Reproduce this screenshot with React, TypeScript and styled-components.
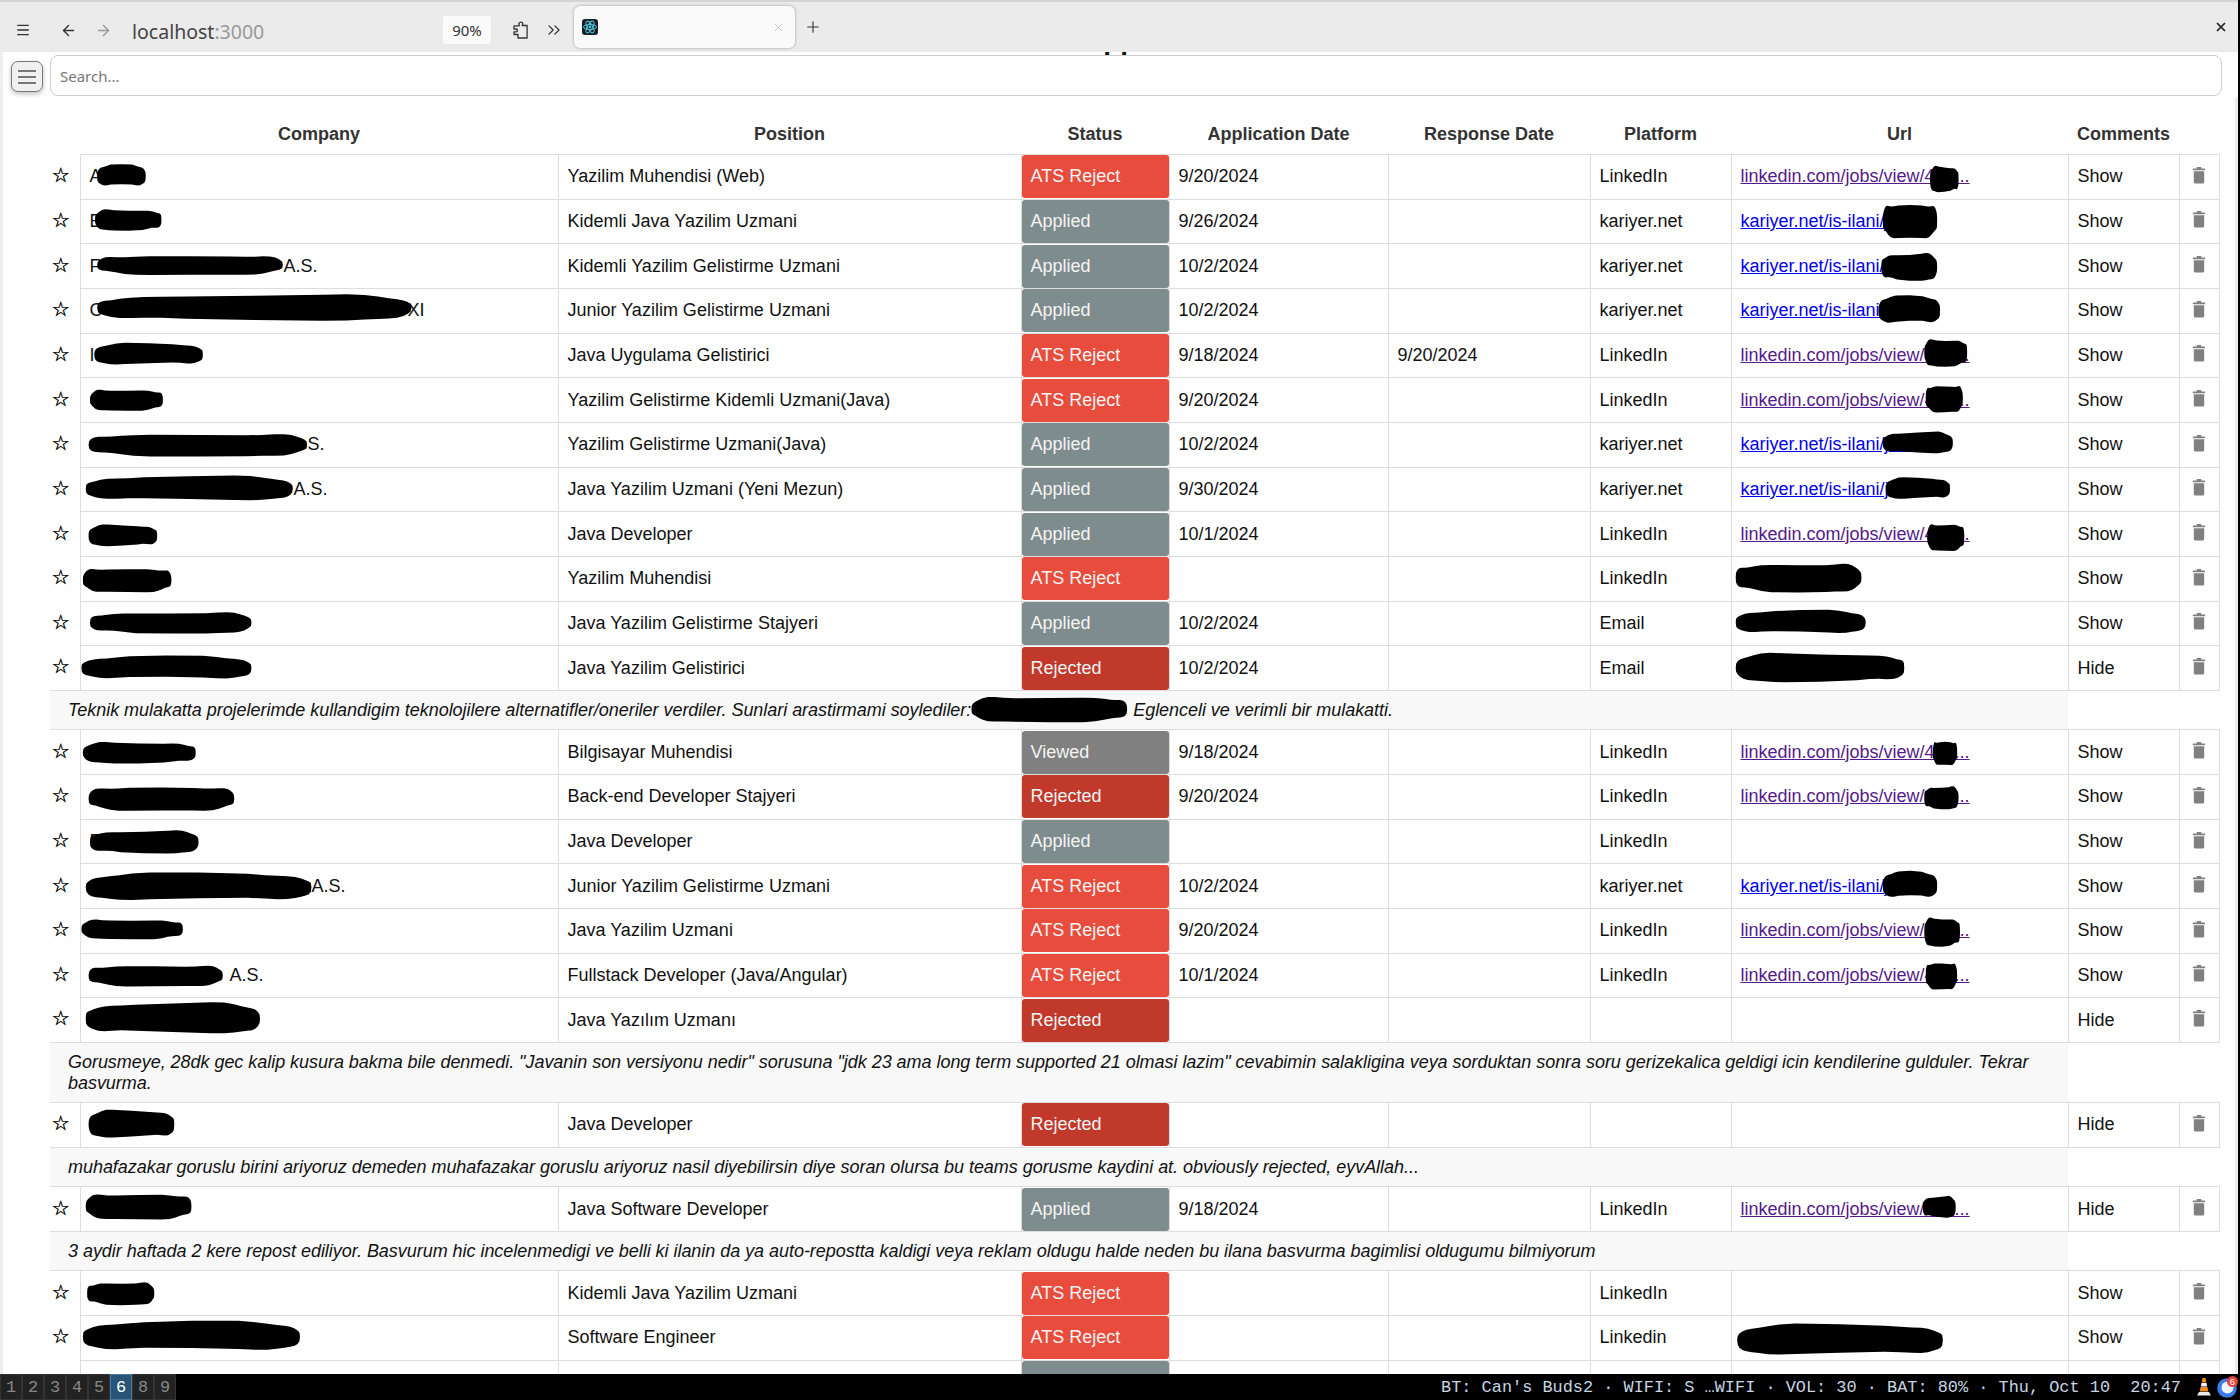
import React from "react"
import styled, {createGlobalStyle} from "styled-components"
import {ArrowLeft, ArrowRight, ChevronsRight, Menu, Plus, X} from "lucide-react"

type Status = "ATS Reject" | "Applied" | "Rejected" | "Viewed"

interface Job {
    lead?: string
    gap?: number
    tail?: string
    position: string
    status: Status
    applied?: string
    response?: string
    platform?: string
    url?: string
    visited?: boolean
    open?: boolean
    cutOff?: boolean
    note?: React.ReactNode
}

const Filler = styled.span<{$width: number}>`
    display: inline-block;
    width: ${p => p.$width}px;
`

const LI = "linkedin.com/jobs/view/401..."
const KA = "kariyer.net/is-ilani/ja..."

const jobs: Job[] = [
    {lead: "A", position: "Yazilim Muhendisi (Web)", status: "ATS Reject", applied: "9/20/2024", platform: "LinkedIn", url: LI, visited: true},
    {lead: "E", position: "Kidemli Java Yazilim Uzmani", status: "Applied", applied: "9/26/2024", platform: "kariyer.net", url: KA},
    {lead: "F", gap: 183, tail: "A.S.", position: "Kidemli Yazilim Gelistirme Uzmani", status: "Applied", applied: "10/2/2024", platform: "kariyer.net", url: KA},
    {lead: "C", gap: 305, tail: "XI", position: "Junior Yazilim Gelistirme Uzmani", status: "Applied", applied: "10/2/2024", platform: "kariyer.net", url: KA},
    {lead: "I", position: "Java Uygulama Gelistirici", status: "ATS Reject", applied: "9/18/2024", response: "9/20/2024", platform: "LinkedIn", url: LI, visited: true},
    {position: "Yazilim Gelistirme Kidemli Uzmani(Java)", status: "ATS Reject", applied: "9/20/2024", platform: "LinkedIn", url: LI, visited: true},
    {gap: 218, tail: "S.", position: "Yazilim Gelistirme Uzmani(Java)", status: "Applied", applied: "10/2/2024", platform: "kariyer.net", url: KA},
    {gap: 204, tail: "A.S.", position: "Java Yazilim Uzmani (Yeni Mezun)", status: "Applied", applied: "9/30/2024", platform: "kariyer.net", url: KA},
    {position: "Java Developer", status: "Applied", applied: "10/1/2024", platform: "LinkedIn", url: LI, visited: true},
    {position: "Yazilim Muhendisi", status: "ATS Reject", platform: "LinkedIn", url: "linkedin.com"},
    {position: "Java Yazilim Gelistirme Stajyeri", status: "Applied", applied: "10/2/2024", platform: "Email"},
    {
        position: "Java Yazilim Gelistirici", status: "Rejected", applied: "10/2/2024", platform: "Email", open: true,
        note: <>Teknik mulakatta projelerimde kullandigim teknolojilere alternatifler/oneriler verdiler. Sunlari arastirmami soylediler:<Filler $width={157}/> Eglenceli ve verimli bir mulakatti.</>,
    },
    {position: "Bilgisayar Muhendisi", status: "Viewed", applied: "9/18/2024", platform: "LinkedIn", url: LI, visited: true},
    {position: "Back-end Developer Stajyeri", status: "Rejected", applied: "9/20/2024", platform: "LinkedIn", url: LI, visited: true},
    {lead: "E", position: "Java Developer", status: "Applied", platform: "LinkedIn"},
    {gap: 222, tail: "A.S.", position: "Junior Yazilim Gelistirme Uzmani", status: "ATS Reject", applied: "10/2/2024", platform: "kariyer.net", url: KA},
    {position: "Java Yazilim Uzmani", status: "ATS Reject", applied: "9/20/2024", platform: "LinkedIn", url: LI, visited: true},
    {gap: 140, tail: "A.S.", position: "Fullstack Developer (Java/Angular)", status: "ATS Reject", applied: "10/1/2024", platform: "LinkedIn", url: LI, visited: true},
    {
        position: "Java Yazılım Uzmanı", status: "Rejected", open: true,
        note: <>Gorusmeye, 28dk gec kalip kusura bakma bile denmedi. "Javanin son versiyonu nedir" sorusuna "jdk 23 ama long term supported 21 olmasi lazim" cevabimin salakligina veya sorduktan sonra soru gerizekalica geldigi icin kendilerine gulduler. Tekrar basvurma.</>,
    },
    {
        position: "Java Developer", status: "Rejected", open: true,
        note: <>muhafazakar goruslu birini ariyoruz demeden muhafazakar goruslu ariyoruz nasil diyebilirsin diye soran olursa bu teams gorusme kaydini at. obviously rejected, eyvAllah...</>,
    },
    {
        position: "Java Software Developer", status: "Applied", applied: "9/18/2024", platform: "LinkedIn", url: LI, visited: true, open: true,
        note: <>3 aydir haftada 2 kere repost ediliyor. Basvurum hic incelenmedigi ve belli ki ilanin da ya auto-repostta kaldigi veya reklam oldugu halde neden bu ilana basvurma bagimlisi oldugumu bilmiyorum</>,
    },
    {position: "Kidemli Java Yazilim Uzmani", status: "ATS Reject", platform: "LinkedIn"},
    {position: "Software Engineer", status: "ATS Reject", platform: "Linkedin"},
    // only the top of this row is above the status bar
    {position: "", status: "Applied", cutOff: true},
]

// scribbled-out parts of the screenshot: x0, x1, y0, y1 on a 1568x980 canvas
const blots: number[][] = [
    [68, 102, 116, 130], [66.500, 113, 147, 161], [68, 198, 179, 192], [68, 288, 207, 224], [66, 142, 241, 255],
    [63, 114, 273, 287], [62, 215, 304, 319], [60, 205, 334, 350], [62, 110, 368, 382], [58, 120, 398, 414],
    [63, 176, 429, 443], [57, 176, 460, 475], [58, 137, 520, 534], [62, 164, 551, 567], [63, 139, 582, 597],
    [60, 218, 612, 630], [57, 128, 644, 657], [62, 156, 676, 690], [60, 182, 703, 723], [62, 122, 778, 796],
    [60, 134, 836, 853], [61, 108, 898, 913], [58, 210, 926, 945],
    [1351, 1371, 117, 134], [1318, 1356, 143, 166], [1317, 1356, 178, 196], [1315, 1358, 208, 226],
    [1347, 1377, 238, 256], [1348, 1374, 270, 288], [1318, 1367, 303, 317], [1320, 1365, 335, 349],
    [1349, 1375, 367, 385], [1215, 1303, 395, 414], [1215, 1306, 428, 443], [1215, 1333, 458, 477],
    [1353, 1370, 519, 535], [1347, 1371, 551, 566], [1318, 1356, 611, 628], [1347, 1372, 643, 662],
    [1348, 1370, 674, 692], [1346, 1369, 838, 852], [1216, 1360, 928, 948], [680, 789, 488, 505],
]

const blotPath = ([x0, x1, y0, y1]: number[], seed: number) => {
    const cx = (x0 + x1) / 2, cy = (y0 + y1) / 2, a = (x1 - x0) / 2, b = (y1 - y0) / 2
    const pts: string[] = []
    for (let i = 0; i < 40; i++) {
        const t = (i / 40) * Math.PI * 2
        const c = Math.cos(t), s = Math.sin(t)
        const wob = 1 + 0.1 * Math.sin(3 * t + seed) + 0.06 * Math.sin(7 * t + seed * 2)
        const x = cx + a * Math.sign(c) * Math.pow(Math.abs(c), 0.45)
        const y = cy + b * wob * Math.sign(s) * Math.pow(Math.abs(s), 0.6)
        pts.push(`${x.toFixed(1)} ${y.toFixed(1)}`)
    }
    return "M" + pts.join("L") + "Z"
}

const statusColors: Record<Status, string> = {
    "ATS Reject": "#e74c3c",
    "Applied": "#7f8c8d",
    "Rejected": "#c0392b",
    "Viewed": "#808080",
}

const GlobalStyle = createGlobalStyle`
    html, body {
        margin: 0;
        background: #fff;
    }
`
const Page = styled.div`
    width: 2240px;
    height: 1400px;
    position: relative;
    overflow: hidden;
    display: flex;
    flex-direction: column;
    font-family: "Liberation Sans", Arial, sans-serif;
    font-size: 18px;
    color: #111;
`
const TabBar = styled.div`
    height: 50px;
    flex: none;
    border-top: 2px solid #d4d4d4;
    background: #ebebeb;
    display: flex;
    align-items: center;
    color: #444;
    font-family: "Noto Sans", sans-serif;
`
const BarIcon = styled.span<{$width: number; $faded?: boolean}>`
    width: ${p => p.$width}px;
    padding-top: 6px;
    flex: none;
    display: flex;
    justify-content: center;
    color: ${p => (p.$faded ? "#999" : "#333")};
    svg {
        flex: none;
    }
`
const Address = styled.div`
    width: 311px;
    margin-left: 16px;
    padding-top: 9px;
    flex: none;
    font-size: 19.500px;
    color: #444;
    span {
        color: #999;
    }
`
const ZoomBadge = styled.div`
    width: 48px;
    height: 28px;
    margin-top: 6px;
    flex: none;
    background: #fafafa;
    border-radius: 3px;
    display: flex;
    align-items: center;
    justify-content: center;
    font-size: 15px;
    color: #333;
`
const TabGap = styled.div`
    width: 15px;
    flex: none;
`
const Tab = styled.div`
    width: 221px;
    height: 42px;
    padding: 0 10px 0 8px;
    box-sizing: border-box;
    flex: none;
    background: #fafafa;
    border-radius: 6px;
    box-shadow: 0 0 3px rgba(0, 0, 0, .35);
    display: flex;
    align-items: center;
    justify-content: space-between;
    color: #aaa;
`
const PlusSlot = styled.span`
    width: 36px;
    flex: none;
    display: flex;
    justify-content: center;
    color: #333;
`
const WindowClose = styled.div`
    margin-left: auto;
    padding-right: 12px;
    color: #222;
    display: flex;
`
const Content = styled.div`
    flex: 1;
    min-height: 0;
    overflow: hidden;
    border-left: 3px solid #eee;
    position: relative;
`
const TitleStrip = styled.div`
    height: 3px;
    overflow: hidden;
    padding-left: 1080px;
    font-size: 28px;
    font-weight: bold;
    color: #111;
`
const TitleText = styled.div`
    margin-top: -26px;
    line-height: 28px;
`
const SearchRow = styled.div`
    display: flex;
    align-items: flex-start;
    gap: 7px;
    padding: 0 18px 0 8px;
    height: 41px;
`
const MenuButton = styled.div`
    width: 32px;
    height: 31px;
    margin-top: 6px;
    box-sizing: border-box;
    flex: none;
    background: #f0f0f0;
    border: 1px solid #777;
    border-radius: 7px;
    box-shadow: 0 2px 5px rgba(0, 0, 0, .25);
    display: flex;
    flex-direction: column;
    justify-content: center;
    gap: 4px;
    padding: 0 6px;
    i {
        display: block;
        height: 2px;
        background: #777;
    }
`
const SearchInput = styled.input`
    flex: 1;
    height: 41px;
    box-sizing: border-box;
    border: 1px solid #ccc;
    border-radius: 8px;
    padding: 0 9px;
    font-family: "Noto Sans", sans-serif;
    font-size: 15px;
    outline: none;
    &::placeholder {
        color: #777;
    }
`
const Table = styled.table`
    width: 2169px;
    margin: 18px 0 0 47px;
    table-layout: fixed;
    border-collapse: collapse;
`
const HeadCell = styled.th`
    height: 40px;
    padding: 0;
    font-size: 18px;
    font-weight: bold;
    color: #333;
    text-align: center;
    vertical-align: middle;
`
const Row = styled.tr`
    height: 44.670px;
`
const Cell = styled.td`
    border: 1px solid #ddd;
    padding: 0 9px;
    white-space: nowrap;
    overflow: hidden;
    color: #111;
`
const StarCell = styled.td`
    padding: 0 8px 3px 0;
    text-align: center;
    font-family: "DejaVu Sans", sans-serif;
    font-size: 20px;
    font-weight: bold;
    line-height: 1;
    color: #000;
    -webkit-text-stroke: 0.400px #000;
`
const StatusCell = styled.td`
    border: 1px solid #ddd;
    padding: 0;
`
const StatusFill = styled.div<{$status: Status}>`
    height: 43px;
    padding: 0 9px;
    display: flex;
    align-items: center;
    border-radius: 3px;
    color: #f4f4f4;
    background: ${p => statusColors[p.$status]};
`
const JobLink = styled.a<{$visited?: boolean}>`
    color: ${p => (p.$visited ? "#551a8b" : "#0000ee")};
    text-decoration: underline;
`
const TrashCell = styled.td`
    border: 1px solid #ddd;
    padding: 0 0 3px;
    text-align: center;
    line-height: 0;
`
const NoteCell = styled.td`
    padding: 8.900px 18px;
    background: #f8f8f8;
    border-top: 1px solid #ddd;
    border-bottom: 1px solid #ddd;
    font-style: italic;
    letter-spacing: -0.040px;
    line-height: 20.700px;
    color: #111;
`
const StatusBar = styled.div`
    height: 26px;
    flex: none;
    background: #000;
    display: flex;
    align-items: stretch;
    font-family: "Liberation Mono", monospace;
    font-size: 16.900px;
    position: relative;
    z-index: 2;
`
const Workspace = styled.div<{$active?: boolean}>`
    width: 22px;
    box-sizing: border-box;
    display: flex;
    align-items: center;
    justify-content: center;
    background: ${p => (p.$active ? "#285577" : "#222")};
    border: 1px solid ${p => (p.$active ? "#4c7899" : "#333")};
    color: ${p => (p.$active ? "#fff" : "#888")};
`
const StatusText = styled.div`
    margin-left: auto;
    display: flex;
    align-items: center;
    color: #c6d6e2;
    white-space: pre;
`
const TrayIcons = styled.div`
    width: 59px;
    padding-left: 16px;
    box-sizing: border-box;
    flex: none;
    display: flex;
    align-items: center;
    gap: 6px;
`
const Overlay = styled.svg`
    position: absolute;
    left: 0;
    top: 0;
    width: 2240px;
    height: 1400px;
    pointer-events: none;
    z-index: 1;
`
const RightEdge = styled.div`
    position: absolute;
    right: 0;
    top: 0;
    bottom: 0;
    width: 2px;
    background: #000;
    z-index: 3;
`
const ScrollTrack = styled.div`
    position: absolute;
    right: 2px;
    top: 97px;
    bottom: 26px;
    width: 3px;
    background: #eee;
`

const PuzzleIcon = () => (
    <svg width="15" height="18" viewBox="0 0 15 18" fill="none" stroke="#333" strokeWidth="1.300" strokeLinejoin="round">
        <path d="M6 2.500C6.500.6 9.500.6 9.800 2.500c.1.800-.3 1.400-.6 2h4.900v12.500H5v-3.500H1v-2.700h2.500c1.200-.3 1.200-2.600-.2-2.800H1V4.800h5.200C6.400 4 5.900 3.300 6 2.500z"/>
    </svg>
)
const ReactIcon = () => (
    <svg width="16" height="16" viewBox="0 0 16 16">
        <rect width="16" height="16" rx="3" fill="#1a1d22"/>
        <g fill="none" stroke="#4fc3dc" strokeWidth="1">
            <ellipse cx="8" cy="8" rx="6.500" ry="2.600"/>
            <ellipse cx="8" cy="8" rx="6.500" ry="2.600" transform="rotate(60 8 8)"/>
            <ellipse cx="8" cy="8" rx="6.500" ry="2.600" transform="rotate(120 8 8)"/>
        </g>
        <circle cx="8" cy="8" r="1.400" fill="#4fc3dc"/>
    </svg>
)
const TrashIcon = () => (
    <svg width="14" height="17" viewBox="0 0 14 18" fill="#808080">
        <rect x="0.500" y="1.500" width="13" height="2" rx=".6"/>
        <rect x="4.500" y="0" width="5" height="2" rx=".6"/>
        <path d="M1.500 4.500h11V16a1.600 1.600 0 0 1-1.600 1.600H3.100A1.600 1.600 0 0 1 1.500 16z"/>
    </svg>
)
const ConeIcon = () => (
    <svg width="14" height="18" viewBox="0 0 14 18">
        <path d="M5.500 0h3l.8 4.500H4.700z" fill="#f28a1c"/>
        <path d="M4.500 5h5l.7 3.500H3.800z" fill="#f4f4f4"/>
        <path d="M3.600 9h6.800l.9 4.500H2.700z" fill="#f28a1c"/>
        <path d="M0 17.500l2-3.500h10l2 3.500z" fill="#e8e8e8"/>
    </svg>
)
const ChatIcon = () => (
    <svg width="21" height="22" viewBox="0 0 21 22">
        <circle cx="10" cy="12" r="9.800" fill="#3b7de8"/>
        <circle cx="10.500" cy="11.500" r="6" fill="#f4f6fb"/>
        <circle cx="15.500" cy="5.500" r="5.500" fill="#e8403a"/>
        <text x="15.500" y="9" textAnchor="middle" fontSize="9.500" fontFamily="Liberation Sans, sans-serif" fill="#fff">6</text>
    </svg>
)

const columns = [30, 478, 463, 148, 219, 202, 141, 337, 111, 40]
const headings = ["", "Company", "Position", "Status", "Application Date", "Response Date", "Platform", "Url", "Comments", ""]

const JobRows: React.FC<{job: Job}> = ({job}) => (
    <>
        <Row>
            <StarCell>{job.cutOff ? null : "☆"}</StarCell>
            <Cell>{job.lead}{job.gap ? <Filler $width={job.gap}/> : null}{job.tail}</Cell>
            <Cell>{job.position}</Cell>
            <StatusCell><StatusFill $status={job.status}>{job.cutOff ? null : job.status}</StatusFill></StatusCell>
            <Cell>{job.applied}</Cell>
            <Cell>{job.response}</Cell>
            <Cell>{job.platform}</Cell>
            <Cell>{job.url ? <JobLink href="#" $visited={job.visited}>{job.url}</JobLink> : null}</Cell>
            <Cell>{job.cutOff ? null : job.open ? "Hide" : "Show"}</Cell>
            <TrashCell>{job.cutOff ? null : <TrashIcon/>}</TrashCell>
        </Row>
        {job.note ? <tr><NoteCell colSpan={8}>{job.note}</NoteCell></tr> : null}
    </>
)

const App: React.FC = () => (
    <Page>
        <GlobalStyle/>
        <TabBar>
            <BarIcon $width={46}><Menu size={16}/></BarIcon>
            <BarIcon $width={44}><ArrowLeft size={17}/></BarIcon>
            <BarIcon $width={26} $faded><ArrowRight size={17}/></BarIcon>
            <Address>localhost<span>:3000</span></Address>
            <ZoomBadge>90%</ZoomBadge>
            <BarIcon $width={58}><PuzzleIcon/></BarIcon>
            <BarIcon $width={10}><ChevronsRight size={20} strokeWidth={1.500}/></BarIcon>
            <TabGap/>
            <Tab>
                <ReactIcon/>
                <X size={13} strokeWidth={1.200}/>
            </Tab>
            <PlusSlot><Plus size={18} strokeWidth={1.500}/></PlusSlot>
            <WindowClose><X size={14} strokeWidth={3}/></WindowClose>
        </TabBar>
        <Content>
            <TitleStrip><TitleText>Applications</TitleText></TitleStrip>
            <SearchRow>
                <MenuButton><i/><i/><i/></MenuButton>
                <SearchInput placeholder="Search..."/>
            </SearchRow>
            <Table>
                <colgroup>
                    {columns.map((w, i) => <col key={i} width={w}/>)}
                </colgroup>
                <thead>
                    <tr>
                        {headings.map((h, i) => <HeadCell key={i}>{h}</HeadCell>)}
                    </tr>
                </thead>
                <tbody>
                    {jobs.map((job, i) => <JobRows key={i} job={job}/>)}
                </tbody>
            </Table>
        </Content>
        <StatusBar>
            {[1, 2, 3, 4, 5, 6, 8, 9].map(n => <Workspace key={n} $active={n === 6}>{n}</Workspace>)}
            <StatusText>BT: Can's Buds2 · WIFI: S …WIFI · VOL: 30 · BAT: 80% · Thu, Oct 10  20:47</StatusText>
            <TrayIcons><ConeIcon/><ChatIcon/></TrayIcons>
        </StatusBar>
        <Overlay viewBox="0 0 1568 980">
            {blots.map((b, i) => <path key={i} d={blotPath(b, i * 1.7)} fill="#000"/>)}
        </Overlay>
        <ScrollTrack/>
        <RightEdge/>
    </Page>
)
export default App
